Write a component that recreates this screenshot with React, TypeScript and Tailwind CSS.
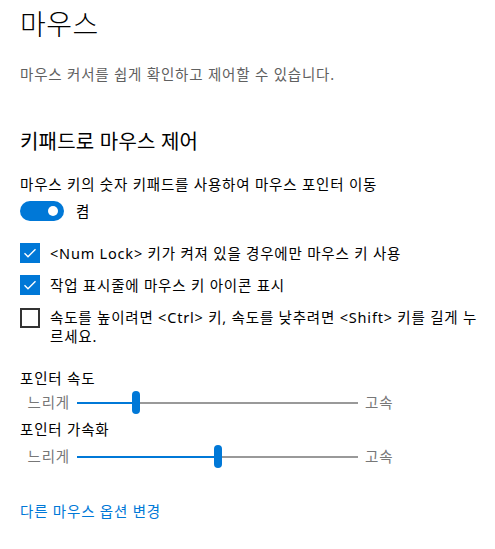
import React, { useState } from 'react';

const FONT = "font-['Noto_Sans','Noto_Sans_CJK_KR',sans-serif]";

const Check: React.FC<{ checked: boolean; onClick: () => void }> = ({ checked, onClick }) => (
  <button
    onClick={onClick}
    className={`w-5 h-5 shrink-0 flex items-center justify-center ${
      checked ? 'bg-[#0078d7]' : 'border-2 border-[#333333] bg-white'
    }`}
  >
    {checked && (
      <svg width="14" height="14" viewBox="0 0 14 14" fill="none">
        <path d="M1.5 7.2L5 10.7L12.5 3.2" stroke="white" strokeWidth="1.4" />
      </svg>
    )}
  </button>
);

const Slider: React.FC<{ value: number }> = ({ value }) => (
  <div className="flex items-center h-6">
    <span className="w-[50px] text-right text-[14.5px] tracking-[0.8px] text-[#777777]">느리게</span>
    <div className="relative ml-[7px] w-[281px] h-6 flex items-center">
      <div className="h-[2px] bg-[#0078d7]" style={{ width: `${value}%` }} />
      <div className="h-[2px] flex-1 bg-[#999999]" />
      <div
        className="absolute top-[0px] w-2 h-[23px] rounded-full bg-[#0078d7]"
        style={{ left: `calc(${value}% - 4px)` }}
      />
    </div>
    <span className="ml-[7px] text-[14.5px] tracking-[0.8px] text-[#777777]">고속</span>
  </div>
);

const App: React.FC = () => {
  const [on, setOn] = useState(true);
  const [numLock, setNumLock] = useState(true);
  const [taskbar, setTaskbar] = useState(true);
  const [ctrl, setCtrl] = useState(false);

  return (
    <div className={`${FONT} w-[495px] h-[549px] bg-white text-black pl-5 pr-3 overflow-hidden text-[14.5px] tracking-[0.8px]`}>
      <h1 className="text-[28px] font-light leading-[36px] pt-[6px] tracking-[0.5px]">마우스</h1>
      <p className="mt-[22px] leading-5 text-[#606060]">
        마우스 커서를 쉽게 확인하고 제어할 수 있습니다.
      </p>

      <h2 className="mt-[44px] text-[20px] leading-7 tracking-[0.2px]">키패드로 마우스 제어</h2>

      <p className="mt-[18px] leading-5">
        마우스 키의 숫자 키패드를 사용하여 마우스 포인터 이동
      </p>
      <div className="mt-[7px] flex items-center gap-3">
        <button
          onClick={() => setOn(!on)}
          className={`relative w-11 h-5 rounded-full ${on ? 'bg-[#0078d7]' : 'border-2 border-black bg-white'}`}
        >
          <span
            className={`absolute top-[5px] w-[10px] h-[10px] rounded-full ${
              on ? 'left-[28px] bg-white' : 'left-[4px] bg-black'
            }`}
          />
        </button>
        <span className="leading-5">{on ? '켬' : '끔'}</span>
      </div>

      <div className="mt-[22px] flex flex-col gap-3 leading-5">
        <div className="flex items-center gap-[10px]">
          <Check checked={numLock} onClick={() => setNumLock(!numLock)} />
          <span>&lt;Num Lock&gt; 키가 켜져 있을 경우에만 마우스 키 사용</span>
        </div>
        <div className="flex items-center gap-[10px]">
          <Check checked={taskbar} onClick={() => setTaskbar(!taskbar)} />
          <span>작업 표시줄에 마우스 키 아이콘 표시</span>
        </div>
        <div className="flex items-start gap-[10px] mt-[1px]">
          <Check checked={ctrl} onClick={() => setCtrl(!ctrl)} />
          <span className="leading-[19px] break-all">
            속도를 높이려면 &lt;Ctrl&gt; 키, 속도를 낮추려면 &lt;Shift&gt; 키를 길게 누르세요.
          </span>
        </div>
      </div>

      <div className="mt-[22px] leading-5">포인터 속도</div>
      <div className="mt-[3px]">
        <Slider value={21} />
      </div>

      <div className="mt-[4px] leading-5">포인터 가속화</div>
      <div className="mt-[6px]">
        <Slider value={50} />
      </div>

      <a href="#" className="block mt-[32px] leading-5 text-[#0078d7]">
        다른 마우스 옵션 변경
      </a>
    </div>
  );
};

export default App;
